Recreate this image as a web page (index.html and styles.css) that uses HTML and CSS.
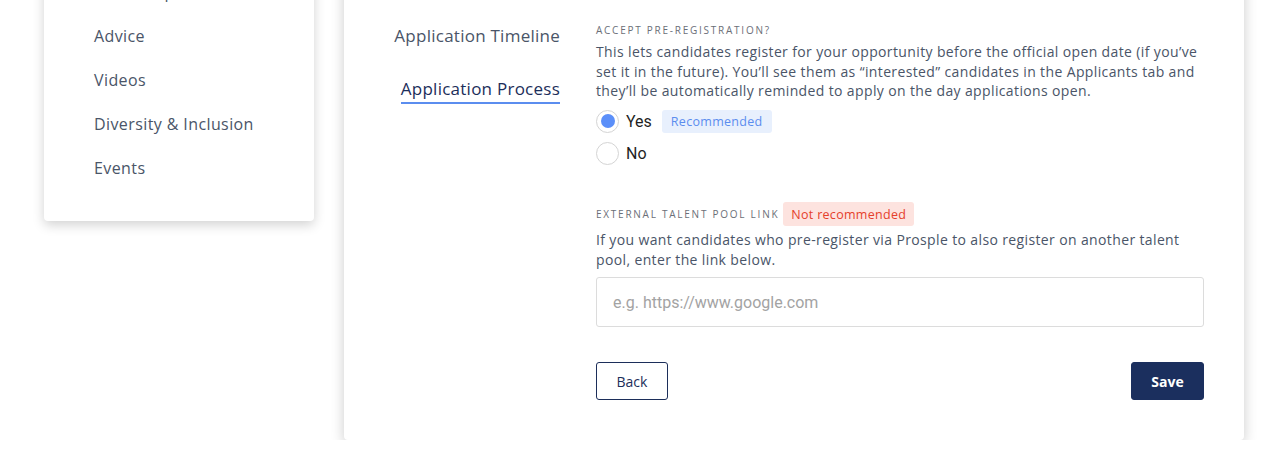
FILE: index.html
```html
<!DOCTYPE html>
<html lang="en">
<head>
<meta charset="utf-8">
<title>Application Process</title>
<link rel="stylesheet" href="styles.css">
</head>
<body>
<div class="page">
  <aside class="sidebar">
    <ul class="side-list">
      <li>Internships</li>
      <li>Advice</li>
      <li>Videos</li>
      <li>Diversity &amp; Inclusion</li>
      <li>Events</li>
    </ul>
  </aside>
  <main class="card">
    <nav class="steps">
      <a class="step">Application Timeline</a>
      <a class="step active">Application Process</a>
    </nav>
    <section class="content">
      <div class="label">ACCEPT PRE-REGISTRATION?</div>
      <p class="desc">This lets candidates register for your opportunity before the official open date (if you’ve set it in the future). You’ll see them as “interested” candidates in the Applicants tab and they’ll be automatically reminded to apply on the day applications open.</p>
      <div class="radios">
        <label class="radio-row"><span class="radio checked"></span><span class="radio-text">Yes</span><span class="badge good">Recommended</span></label>
        <label class="radio-row"><span class="radio"></span><span class="radio-text">No</span></label>
      </div>
      <div class="label-row"><span class="label">EXTERNAL TALENT POOL LINK</span><span class="badge bad">Not recommended</span></div>
      <p class="desc desc2">If you want candidates who pre-register via Prosple to also register on another talent pool, enter the link below.</p>
      <input class="field" type="text" placeholder="e.g. https://www.google.com">
      <div class="actions">
        <button class="btn btn-outline">Back</button>
        <button class="btn btn-solid">Save</button>
      </div>
    </section>
  </main>
</div>
</body>
</html>
```

FILE: styles.css
```css
* { box-sizing: border-box; }
html, body { margin: 0; padding: 0; background: #ffffff; overflow: hidden; }
body { font-family: "Open Sans", "Noto Sans", sans-serif; color: #4a5568; }

.page {
  display: flex;
  align-items: flex-start;
  gap: 30px;
  margin-top: -30px;
  padding-left: 44px;
}

.sidebar {
  width: 270px;
  background: #fff;
  border-radius: 0 0 4px 4px;
  box-shadow: 0 4px 12px rgba(0,0,0,0.18);
  padding: 0 0 31px 50px;
}
.side-list { list-style: none; margin: 0; padding: 0; }
.side-list li {
  height: 44px;
  line-height: 44px;
  font-size: 16px;
  color: #4a5568;
  letter-spacing: 0.4px;
}

.card {
  width: 900px;
  background: #fff;
  border-radius: 0 0 4px 4px;
  box-shadow: 0 4px 14px rgba(0,0,0,0.2);
  display: flex;
  padding: 50px 40px 40px 0;
}

.steps {
  width: 216px;
  display: flex;
  flex-direction: column;
  align-items: flex-end;
  padding-top: 4px;
  gap: 29px;
  margin-right: 36px;
}
.step {
  font-size: 17px;
  line-height: 24px;
  letter-spacing: 0.25px;
  color: #4a5568;
  white-space: nowrap;
}
.step.active {
  color: #1c2e5a;
  border-bottom: 2px solid #5b8def;
  padding-bottom: 1px;
}

.content { width: 608px; display: flex; flex-direction: column; }
.label {
  font-size: 10px;
  line-height: 20px;
  letter-spacing: 1.75px;
  color: #6b6f78;
}
.desc {
  margin: 2px 0 0;
  font-size: 14px;
  line-height: 19.5px;
  letter-spacing: 0.37px;
  color: #4a5568;
}
.radios { display: flex; flex-direction: column; gap: 8px; margin-top: 8.5px; }
.radio-row { display: flex; align-items: center; height: 24px; }
.radio {
  width: 23px; height: 23px;
  border-radius: 50%;
  border: 1px solid #d4d4d4;
  display: flex; align-items: center; justify-content: center;
  background: #fff;
}
.radio.checked::after {
  content: "";
  width: 14px; height: 14px; border-radius: 50%;
  background: #5b8ff9;
}
.radio-text {
  margin-left: 7px;
  font-family: Roboto, "Liberation Sans", sans-serif;
  font-size: 16px;
  color: #1f1f1f;
}
.badge {
  display: inline-flex;
  align-items: center;
  height: 23px;
  padding: 0 8px;
  border-radius: 3px;
  font-size: 12.5px;
  letter-spacing: 0.3px;
}
.badge.good { margin-left: 10px; background: #e8f0fd; color: #5b8def; padding: 0 9px; }
.badge.bad { margin-left: 4px; background: #fde3df; color: #e5402b; height: 24px; }

.label-row { display: flex; align-items: center; margin-top: 37px; height: 24px; }
.desc2 { margin-top: 4px; }

.field {
  margin-top: 8px;
  width: 608px;
  height: 50px;
  border: 1px solid #dcdcdc;
  border-radius: 3px;
  padding: 0 16px;
  font-family: Roboto, "Liberation Sans", sans-serif;
  font-size: 16px;
  color: #333;
  outline: none;
}
.field::placeholder { color: #a3a3a3; }

.actions { display: flex; justify-content: space-between; margin-top: 35px; }
.btn {
  height: 38px;
  border-radius: 3px;
  font-family: "Open Sans", sans-serif;
  font-size: 14px;
  padding: 0;
  cursor: pointer;
}
.btn-outline { width: 72px; background: #fff; border: 1px solid #1c2e5a; color: #1c2e5a; }
.btn-solid { width: 73px; background: #1b2f5e; border: 1px solid #1b2f5e; color: #fff; font-weight: 700; }
```
